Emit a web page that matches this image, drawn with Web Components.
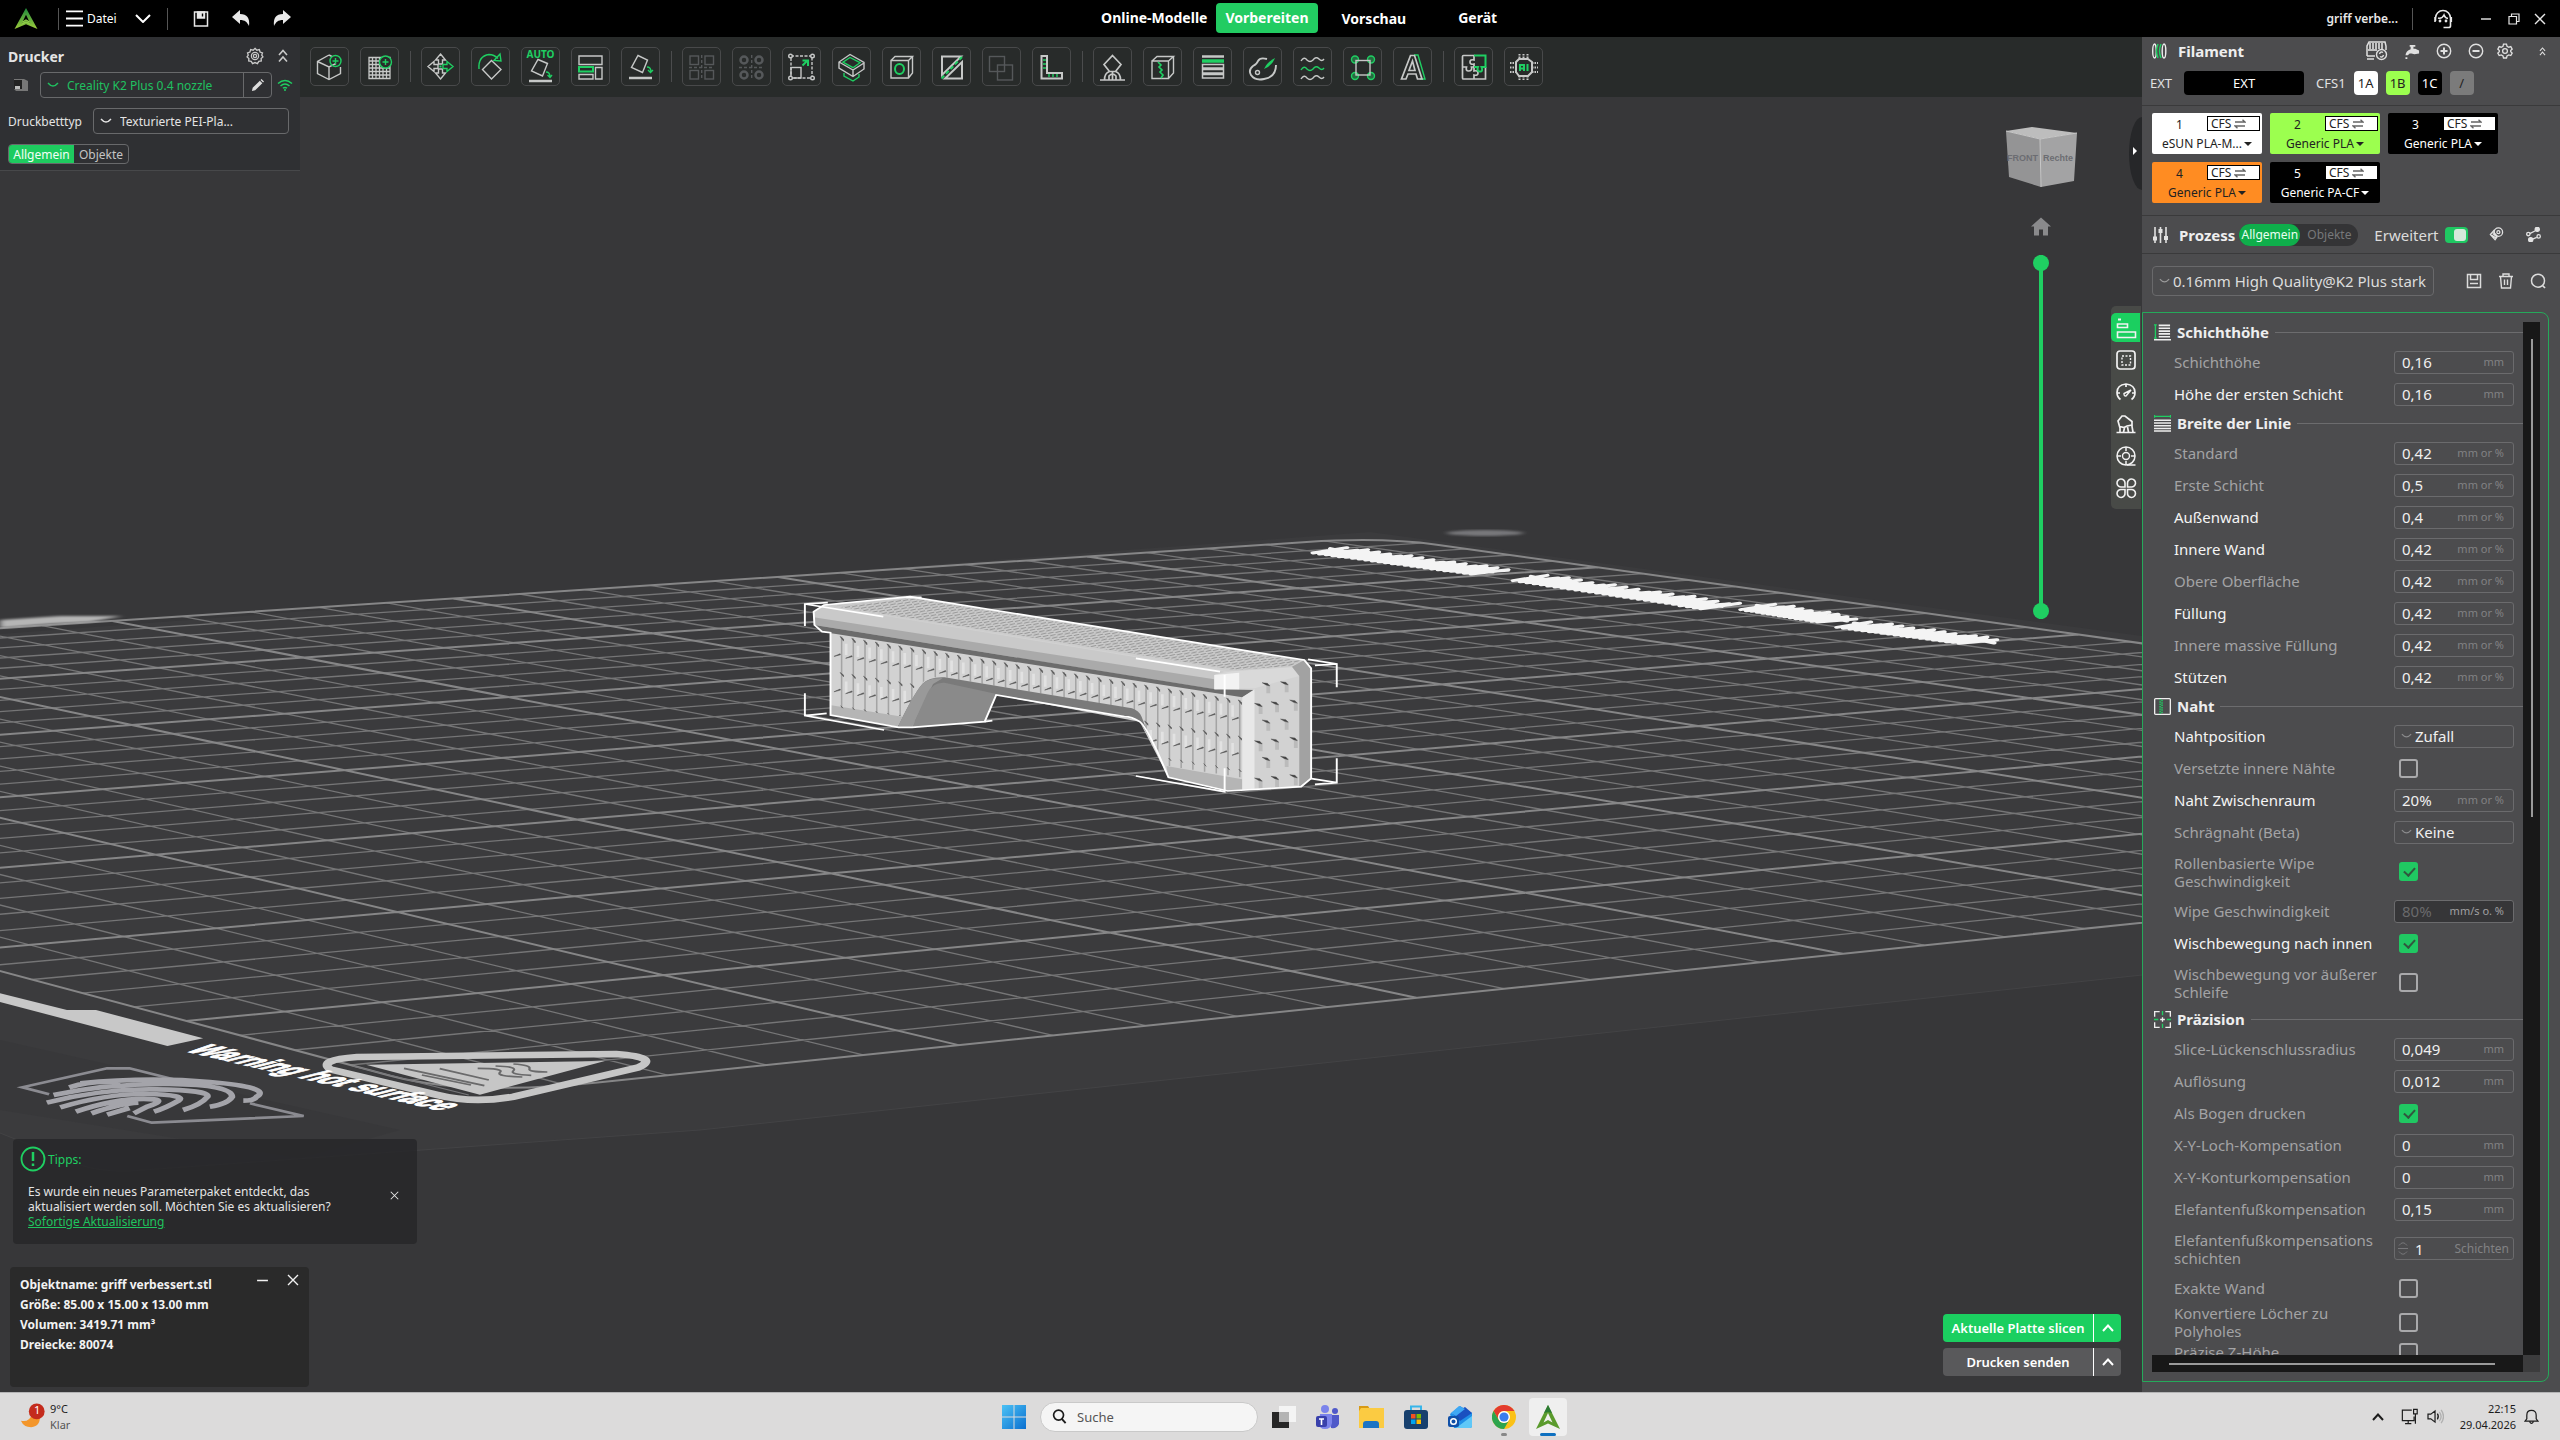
<!DOCTYPE html>
<html lang="de">
<head>
<meta charset="utf-8">
<title>griff verbessert</title>
<style>
html,body{margin:0;height:100%;background:#373739}
body{font-family:"Noto Sans","Liberation Sans",sans-serif;font-size:15px;color:#e6e6e6;overflow:hidden}
</style>
</head>
<body>
<slicer-app></slicer-app>
<script>
const RESET = `*{box-sizing:border-box}button,input,select{font:inherit;color:inherit;background:none;border:0;margin:0;padding:0;outline:0}button{display:flex;align-items:center;justify-content:center;cursor:pointer}svg{display:block}select{appearance:none}`;

function define(name, css, html, setup) {
  customElements.define(name, class extends HTMLElement {
    constructor() { super(); this.attachShadow({ mode: 'open' }); }
    connectedCallback() {
      const t = document.createElement('template');
      t.innerHTML = `<style>${RESET}${css}</style>` + (typeof html === 'function' ? html(this) : html);
      this.shadowRoot.replaceChildren(t.content.cloneNode(true));
      if (setup) setup(this.shadowRoot, this);
    }
  });
}

/* ---------- icons ---------- */
const G = '#1fcf62';
const sq = (x, y, w, h, c) => `<rect x="${x}" y="${y}" width="${w}" height="${h}"${c ? ` stroke="${c}"` : ''}/>`;
const ICONS = {
  logo: ['0 0 24 22', `<defs><linearGradient id="l" x1="0" x2="0" y1="0" y2="1"><stop offset="0" stop-color="#1f8a3c"/><stop offset="1" stop-color="#9ccb3b"/></linearGradient></defs><path d="M12 0 24 22 12 17 0 22Z M12 7 7.500 16.500 12 14.500 16.500 16.500Z" fill="url(#l)" fill-rule="evenodd" stroke="none"/><path d="M8 15 12 12.500 16 15M7.500 17 12 14.500 16.500 17" stroke="#8fd04a"/>`],
  menu: ['0 0 18 18', '<path d="M0 1.500h18M0 9h18M0 16.500h18" stroke-width="2"/>'],
  down: ['0 0 16 9', '<path d="m1 1 7 7 7-7" stroke-width="2"/>'],
  down2: ['0 0 12 6', '<path d="M1 1q5 6 10 0"/>'],
  up: ['0 0 12 8', '<path d="m1 7 5-5.500L11 7" stroke-width="2"/>'],
  save: ['0 0 16 16', '<path d="M1.500 1h13v14h-13z" stroke-width="1.500"/><path d="M4.500 1h7v6h-7z" fill="currentColor"/><path d="M9.500 2.500v3" stroke="#000"/>'],
  undo: ['0 0 18 17', '<path d="M8 0v4c7 0 10 4 9 12-2-4-4-6-9-6v4L0 7z" fill="currentColor" stroke="none"/>'],
  redo: ['0 0 18 17', '<path d="M10 0v4C3 4 0 8 1 16c2-4 4-6 9-6v4l8-7z" fill="currentColor" stroke="none"/>'],
  headset: ['0 0 20 20', '<path d="M2.500 12V9a7.500 7.500 0 0 1 15 0v8q0 1.500-2 1.500h-5M2 8v5M18.300 8v5M5 9q4 1 6-3 1 3 4 3.500" stroke-width="1.600"/><circle cx="7" cy="12" r=".7"/><circle cx="13" cy="12" r=".7"/>'],
  min: ['0 0 12 12', '<path d="M1 6h10"/>'],
  restore: ['0 0 12 12', '<path d="M1 3.500h7.500V11H1zM3.500 3.500V1H11v7.500H8.500" stroke-width="1.200"/>'],
  close: ['0 0 12 12', '<path d="m1 1 10 10M11 1 1 11" stroke-width="1.400"/>'],
  gear: ['0 0 20 20', '<path d="M10 1.500l2 2 2.800-.6.800 2.700 2.700 1L17.500 9l1.300 2-2 1.800.2 2.800-2.800.4-1.500 2.500-2.700-1.200-2.700 1.200L5.800 16 3 15.600l.2-2.800-2-1.800L2.500 9l-.8-2.400 2.700-1 .8-2.700L8 3.500z" stroke-width="1.500"/><circle cx="10" cy="10" r="4" stroke-width="1.400"/><circle cx="10" cy="10" r="1.800"/>'],
  gear2: ['0 0 16 16', '<path d="M6.500 1.200h3l.5 2 1.800 1 2-.6 1.400 2.500L13.700 7.500v1.200l1.500 1.400-1.400 2.500-2-.6-1.800 1-.5 2h-3l-.5-2-1.800-1-2 .6L.800 10.100l1.500-1.400V7.500L.800 6.100l1.400-2.500 2 .6 1.800-1z" stroke-width="1.300"/><circle cx="8" cy="8" r="2.400" stroke-width="1.300"/>'],
  dblup: ['0 0 10 14', '<path d="m1 6 4-4.500L9 6M1 12.500 5 8l4 4.500" stroke-width="1.600"/>'],
  printer: ['0 0 16 16', '<path d="M1 2h10l4 2v10H3L1 12z" fill="#777" stroke="none"/><path d="M1 3h8v9H1z" fill="#222" stroke="none"/><path d="M2 9h5v3H2z" fill="#bbb" stroke="none"/>'],
  pencil: ['0 0 14 14', '<path d="m1 13 .8-3.500L9.500 1.800l2.700 2.700-7.700 7.700zM10.300 1l1-.9L14 2.800l-1 1z" fill="#ddd" stroke="none"/>'],
  wifi: ['0 0 16 12', `<path d="M1 4.500q7-6 14 0M3.500 7q4.500-4 9 0M6 9.300q2-1.700 4 0" stroke="${G}" stroke-width="1.500"/><circle cx="8" cy="11" r="1" fill="${G}" stroke="none"/>`],
  /* toolbar */
  addcube: ['0 0 39 39', `<path d="M19 8 7.500 14.500v12L19 32.500l11.500-6V20M7.500 14.500 19 20l7-3.500M19 20v12.500M19 8l3 1.500"/><circle cx="25.500" cy="14" r="5.500" stroke="${G}"/><path d="M22.500 14h6M25.500 11v6" stroke="${G}"/>`],
  addplate: ['0 0 39 39', `<path d="M9 10.500h21v21H9zM9 14h21M9 17.500h21M9 21h21M9 24.500h21M9 28h21M12.500 10v21M16 10v21M19.500 10v21M23 10v21M26.500 10v21" stroke-width="1.300"/><circle cx="25.500" cy="15" r="6" fill="#282b2a" stroke="${G}"/><path d="M22.500 15h6M25.500 12v6" stroke="${G}"/>`],
  move: ['0 0 39 39', `<path d="M19.500 7l5 6h-3v4h-4v-4h-3zM19.500 32l5-6h-3v-4h-4v4h-3zM7 19.500l6-5v3h4v4h-4v3z"/><path d="M32 19.500l-6-5v3h-4v4h4v3z" stroke="${G}"/><path d="M18.500 19.500h2" stroke="${G}" stroke-width="2"/>`],
  rotate: ['0 0 39 39', `<path d="m20.500 13.500 9.500 9-9.500 9.500-9-9.500z"/><path d="M8 22Q7 9 18 7.500q5 0 9 4M29 7l1 7-7-.500z" stroke="${G}"/>`],
  auto: ['0 0 39 39', `<path d="m17 12.500 9.500 4-5 12.500-11-5z" /><path d="M8 34h23" stroke-width="2.500"/><path d="M25 25q4 0 4 5M26.500 28l2.500 2.500 2-2.500" stroke="${G}"/>`],
  arrange: ['0 0 39 39', `<path d="M8 9h23v8.500H8zM24.500 20.500H31V32h-6.500zM8 27.500h14V32H8z"/><path d="M8 20h14v4.500H8z" stroke="${G}" stroke-width="2"/>`],
  flatten: ['0 0 39 39', `<path d="m17 8.500 9.500 4.500-5 12.500-11-5z"/><path d="M8 31h23" stroke-width="2.500"/><path d="M26 20q4 0 4 5M27 23l2.500 2.500L32 23" stroke="${G}"/>`],
  split1: ['0 0 39 39', `${sq(8, 9, 8.500, 8.500)}${sq(23, 9, 8.500, 8.500)}${sq(8, 23.500, 8.500, 8.500)}${sq(23, 23.500, 8.500, 8.500)}<path d="M19.700 8v24M7 20.500h25" stroke-dasharray="3 2"/>`],
  split2: ['0 0 39 39', `<circle cx="12" cy="13" r="3.500" stroke-width="2.500"/><circle cx="27" cy="13" r="3.500" stroke-width="2.500"/><circle cx="12" cy="28" r="3.500" stroke-width="2.500"/><circle cx="27" cy="28" r="3.500" stroke-width="2.500"/><path d="M19.700 8v24M7 20.500h25" stroke-dasharray="3 2"/>`],
  scale: ['0 0 39 39', `<path d="M9 9h21v22H9z" stroke-dasharray="3 1.500"/>${sq(9, 20.500, 10, 10.500)}<g fill="#282b2a"><circle cx="8.500" cy="9" r="1.800"/><circle cx="30.500" cy="9" r="1.800"/><circle cx="8.500" cy="31" r="1.800"/><circle cx="30.500" cy="31" r="1.800"/></g><path d="m20.500 18.500 5-5M20.500 13.500h5.500V19" stroke="${G}" stroke-width="2"/>`],
  hollow: ['0 0 39 39', `<path d="M18 7.500 7 15v6l14 8.500 11-7.500v-6.500zM7 15l14 8 11-7M21 23v6.500"/><path d="m18 10.500-7 4.700 10 5.500 7-5z M12 26v3l9 5 6-4v-3" stroke="${G}"/>`],
  boolean: ['0 0 39 39', `<path d="M9 13.500h17.500V31H9zM9 13.500l4-4h17.500l-4 4M30.500 9.500V26l-4 5"/><ellipse cx="17.500" cy="22" rx="4.500" ry="5" stroke="${G}" stroke-width="2"/>`],
  cut: ['0 0 39 39', `<path d="M10 9.500h19L10 28zM30 15v16.500H13z" stroke-width="2"/><path d="M9.500 31.500 30 10" stroke="${G}" stroke-width="2" stroke-dasharray="4 2.500"/>`],
  merge: ['0 0 39 39', `${sq(7.500, 9.500, 15, 15)}${sq(15.500, 18, 15, 15)}`],
  measure: ['0 0 39 39', `<path d="M9.500 9h5.500v17h15v5.500H9.500z" stroke-width="2"/><path d="M11 13h3M11 17h3M11 21h3M17 30v-3M21 30v-3M25 30v-3" stroke="${G}"/>`],
  support: ['0 0 39 39', `<path d="m19.500 8.500 8.500 9-5.500 7h-6l-5.500-7zM7 33h25M11.500 33q0-7 5-8.500M27.500 33q0-7-5-8.500M16 33v-4q3.500-4 7 0v4M19.500 24.500V33" stroke-width="1.700"/>`],
  seam: ['0 0 39 39', `<path d="M9 14h16.500v17.500H9zM9 14l5-4.500h16.500l-5 4.500M30.500 9.500V26l-5 5.500"/><path d="M15 15l3 3-2 2 3 3-2 2 3 3-2 3" stroke="${G}" stroke-width="1.700"/>`],
  layers: ['0 0 39 39', `<path d="M9 9.500h22" stroke-width="2.500"/><path d="M9 14h22" stroke="${G}" stroke-width="3.500"/><path d="M9.500 17.500h21V21h-21zM9.500 22.500h21v3.500h-21zM9.500 27.500h21V31h-21z" stroke-width="1.500"/>`],
  paint: ['0 0 39 39', `<path d="M24 12q-7-2-9 2-1 3-5 5-5 4-2 9 4 6 13 4 12-2 12-14" stroke-width="1.900"/><circle cx="14.500" cy="25.500" r="2"/><path d="M32 11q-8 4-11 11 8-3 11-11z" fill="${G}" stroke="none"/>`],
  fuzzy: ['0 0 39 39', `<path d="M8 14q3-5 6-1 3 3 6 0 3-4 6-1 3 3 5 0M8 32q3-5 6-1 3 3 6 0 3-4 6-1 3 3 5 0"/><path d="M8 23q3-5 6-1 3 3 6 0 3-4 6-1 3 3 5 0" stroke="${G}"/>`],
  ears: ['0 0 39 39', `<g stroke="${G}" fill="${G}" fill-opacity=".4"><circle cx="12" cy="12.500" r="3.500"/><circle cx="28" cy="12.500" r="3.500"/><circle cx="12" cy="29" r="3.500"/><circle cx="28" cy="29" r="3.500"/></g>${sq(13, 13.500, 14, 14.500)}`],
  emboss: ['0 0 39 39', `<path d="M21 8h4l7 24h-5" stroke="${G}"/><path d="M17.500 8.500h4L29 32h-4.500L23 27h-8l-2 5H8.500zM19.500 14 16 23.500h6z" stroke-width="1.700"/>`],
  puzzle: ['0 0 39 39', `<path d="M20 8.500H9.500q-1 0-1 1V20h4q-1 4 2 4 4 0 3-4H20v-3q-4 1-4-2t4-2zM8.500 20v11q0 1 1 1H20v-4q4 1 4-2t-4-2v-4M20 32h11.500V20" stroke-width="1.700"/><path d="M20 8.500h11.500V20h-4q2 5-2 4.500-3-.500-1.500-4.500H20" stroke="${G}" stroke-width="2"/>`],
  ai: ['0 0 39 39', `<path d="M12 15l3-3h9l4 3v10l-4 4h-9l-3-4z" stroke-width="2"/><path d="M15.500 7v5M19.500 7v5M23.500 7v5M15.500 29v5M19.500 29v5M23.500 29v5" stroke-width="2" stroke-dasharray="1.500 1"/><path d="M6 16h6M6 20.500h6M6 25h6M28 16h6M28 20.500h6M28 25h6" stroke-width="2" stroke-dasharray="1.500 1"/><path d="M16 24v-6h4v6M16 21.500h4M23.500 17v7" stroke="${G}" stroke-width="2"/>`],
  /* viewport side */
  home: ['0 0 20 18', '<path d="M10 0 20 9h-3v9h-5v-6H8v6H3V9H0z" fill="#8a8a8c" stroke="none"/>'],
  q1: ['0 0 22 22', '<path d="M3 2.500h3" stroke-width="2"/><path d="M2.500 7h10v3.500h-10zM2.500 15h18v5.500h-18z" stroke-width="1.600" />'],
  q2: ['0 0 22 22', '<rect x="2" y="2" width="18" height="18" rx="3" stroke-width="1.700"/><path d="M7 7h8.500v9H7z" stroke-dasharray="2 1.500"/>'],
  q3: ['0 0 22 22', '<path d="M5.500 18.500Q2 16 2 11.500 2 4 11 3q9 1 9 8.500 0 4.500-3.500 7M11 3v3M2 12h3M17 12h3" stroke-width="1.700"/><path d="m11 15 5-6-7 3.500q0 3 2 2.500z"/>'],
  q4: ['0 0 22 22', '<path d="M1.500 19.500h19M5 19v-4l-2-7 4-5 3 0 7 5.500v5l1 5.500M5 13.500l4 1 3-1.500 5-1M8.500 19l1-4M13.500 19l-1-5" stroke-width="1.700"/>'],
  q5: ['0 0 22 22', '<circle cx="11" cy="11" r="9" stroke-width="1.500"/><circle cx="11" cy="11" r="3.500"/><path d="M11 2v4M11 16v4M2 11h4M16 11h4M12 20h8.500" stroke-width="1.500"/>'],
  q6: ['0 0 22 22', '<path d="M10 10H6.500A4 4 0 1 1 10 6zM12.500 10V6a4 4 0 1 1 3.500 4zM10 12.500H6.500A4 4 0 1 0 10 16zM12.500 12.500V16A4 4 0 1 0 16 12.500z" stroke-width="1.600"/>'],
  /* filament panel */
  spool: ['0 0 15 16', `<ellipse cx="2.500" cy="8" rx="1.800" ry="7"/><path d="M6 1q-3 7 0 14M9 1Q6 8 9 15" stroke="${G}"/><ellipse cx="12" cy="8" rx="1.800" ry="7"/>`],
  cfs: ['0 0 22 20', '<path d="M1 15V5l2-4h16l1 4v4M1 15h8M1 18h7" stroke-width="1.500"/><path d="M4 2v7M7 2v7M10 2v7M13 2v6M16 2v6M2 9h9" stroke-width="2" opacity=".8"/><circle cx="15.500" cy="13.500" r="5"/><path d="M13.500 13q1-3 3.500-1.500M17.500 14q-1 3-3.500 1.500"/>'],
  tap: ['0 0 16 16', '<path d="M5 1h6v2H9v2h2l4 2v3l-5 1-3-1H5l-2 2H.500Q1 7 6 5.500V3H5zM.500 14h2v2h-2z" fill="currentColor" stroke="none"/>'],
  plus: ['0 0 16 16', '<circle cx="8" cy="8" r="6.700"/><path d="M4.500 8h7M8 4.500v7" stroke-width="2"/>'],
  minus: ['0 0 16 16', '<circle cx="8" cy="8" r="6.700"/><path d="M4.500 8h7" stroke-width="2"/>'],
  swap: ['0 0 12 10', '<path d="M1 3h10L8.500.700M11 7H1l2.500 2.300" stroke="#666"/>'],
  sliders: ['0 0 16 18', '<path d="M2.500 1v16M8 1v16M13.500 1v16" stroke-width="1.600"/><path d="M2.500 10.500v4M8 3v4M13.500 10v4" stroke-width="4"/>'],
  rocket: ['0 0 16 16', '<circle cx="10" cy="5.500" r="4.500"/><circle cx="10" cy="5.500" r="1.600"/><path d="M6 3 1.500 8l5 5.500L9 10M3 9l5 3M4 7l4 3M5 5.500 9 10"/>'],
  nodes: ['0 0 16 16', '<circle cx="12" cy="2.500" r="2.200" fill="currentColor"/><circle cx="13.500" cy="10" r="1.800"/><circle cx="2.500" cy="7.500" r="1.800"/><circle cx="5" cy="13.500" r="2.200" fill="currentColor"/><path d="M10 4 4 7M11.500 11 7 13"/>'],
  savep: ['0 0 16 16', '<path d="M1.500 1.500h13v13h-13zM4.500 1.500h7v5h-7zM4 10.500h8" stroke-width="1.500"/>'],
  trash: ['0 0 16 16', '<path d="M1 3.500h14M5 3.500V1h6v2.500M2.500 3.500l1 11.500h9l1-11.500M6.500 6.500v5.500M9.500 6.500v5.500" stroke-width="1.400"/>'],
  search: ['0 0 16 16', '<circle cx="8" cy="7.700" r="6.500" stroke-width="1.500"/><path d="m12.500 12.500 2.500 2.500" stroke-width="1.700"/>'],
  h1: ['0 0 18 18', `<path d="M1.500 1v14M0 1h3M0 15h3" stroke="${G}"/><path d="M5 1.500h12M5 4.500h12M5 7.500h12M5 10.500h12M5 13.500h12M0 16.700h18" stroke-width="1.700"/>`],
  h2: ['0 0 18 18', `<path d="M0 1.500h18M.5 0v3M17.500 0v3" stroke="${G}"/><path d="M0 5.500h18M0 8.500h18M0 11.500h18M0 14.300h18M0 17h18" stroke-width="1.600"/>`],
  h3: ['0 0 18 18', `<rect x=".7" y=".7" width="16.600" height="16.600" rx="1"/><path d="M6.500 1v16M8.500 2v15" stroke="${G}" stroke-width="1.600" stroke-dasharray="1.500 1"/>`],
  h4: ['0 0 18 18', `<path d="M6 .7H.7V6M12 .7h5.300V6M6 17.300H.7V12M12 17.300h5.300V12"/><path d="M9 0v4.500M9 13.500V18M0 9h4.500M13.500 9H18" stroke="${G}"/><path d="M6.500 9h5M9 6.500v5"/>`],
  info: ['0 0 26 26', `<circle cx="13" cy="13" r="11.500" stroke="${G}" stroke-width="1.800"/><path d="M13 6v9M13 17.500V20" stroke="${G}" stroke-width="2.500"/>`],
  /* taskbar */
  moon: ['0 0 28 30', '<path d="M21 12q2 13-9 14-8 0-11-7 9 2 12-7z" fill="#f3962b" stroke="none"/><circle cx="18" cy="9" r="8.500" fill="#c42b1c" stroke="none"/>'],
  win: ['0 0 24 24', '<defs><linearGradient id="w" x1="0" y1="0" x2="1" y2="1"><stop offset="0" stop-color="#4cc2f5"/><stop offset="1" stop-color="#0a6fd0"/></linearGradient></defs><path d="M0 0h11.500v11.500H0zM12.500 0H24v11.500H12.500zM0 12.500h11.500V24H0zM12.500 12.500H24V24H12.500z" fill="url(#w)" stroke="none"/>'],
  mag: ['0 0 16 16', '<circle cx="7" cy="6.500" r="5.300" stroke-width="1.800"/><path d="m10.500 10.500 4 4.500" stroke-width="2"/>'],
  task: ['0 0 24 24', '<path d="M7 1h17v16H7z" fill="#f4f4f4" stroke="none"/><path d="M0 7h17v16H0z" fill="#262626" stroke="none"/><path d="M7 7h10v10H7z" fill="#b4b4b4" stroke="none"/>'],
  teams: ['0 0 24 24', '<g stroke="none"><circle cx="9" cy="4" r="4" fill="#7b83eb"/><circle cx="19" cy="6" r="3" fill="#5059c9"/><path d="M13 10h10v9q-2 5-8 4z" fill="#5059c9"/><path d="M4 9h12v9q-1 6-7 6t-6-6z" fill="#7b83eb"/><rect y="11" width="11" height="11" rx="2" fill="#3940ab"/></g><path d="M3 14h5M5.500 14v6" stroke="#fff" stroke-width="1.600"/>'],
  files: ['0 0 26 24', '<path d="M0 1h9l2 3h13v4H0z" fill="#d89a16" stroke="none"/><path d="M2 3h23v20H0V6z" fill="#fbcb42" stroke="none"/><path d="M4 23v-4q0-3 3-3h10q3 0 3 3v4z" fill="#1c74c4" stroke="none"/>'],
  store: ['0 0 24 24', '<path d="M7 6V1.500h10V6" stroke="#37b5ea" stroke-width="2"/><rect y="5" width="24" height="19" rx="3" fill="#17406e" stroke="none"/><g stroke="none"><path d="M7 9h4.500v4.500H7z" fill="#f25022"/><path d="M12.500 9H17v4.500h-4.500z" fill="#7fba00"/><path d="M7 14.500h4.500V19H7z" fill="#00a4ef"/><path d="M12.500 14.500H17V19h-4.500z" fill="#ffb900"/></g>'],
  outlook: ['0 0 24 24', '<g stroke="none"><path d="M2 9 12 1l12 7v13q0 2-2 2H6z" fill="#1f8fe8"/><path d="M5 9 17 2l7 6-12 8z" fill="#1a50c0"/><path d="M3 8 11 1l6 3-9 7z" fill="#3fa8f4"/><path d="M8 23 24 11v10q0 2-2 2z" fill="#5fc8f8"/><rect y="11" width="11" height="11" rx="2" fill="#1050a8"/></g><circle cx="5.500" cy="16.500" r="2.800" stroke="#fff" stroke-width="1.500"/>'],
  chrome: ['0 0 24 24', '<g stroke="none"><circle cx="12" cy="12" r="12" fill="#fbc116"/><path d="M1.600 6A12 12 0 0 1 22.400 6H12a6 6 0 0 0-5.200 9z" fill="#e33b2e"/><path d="M1.600 6A12 12 0 0 0 12 24l5.200-9a6 6 0 0 1-10.400 0z" fill="#2da44e"/><circle cx="12" cy="12" r="6" fill="#fff"/><circle cx="12" cy="12" r="4.600" fill="#3b7ded"/></g>'],
  creality: ['0 0 24 24', '<path d="M12 0 24 24 12 18.500 0 24Z M12 8 7.500 17.500 12 15 16.500 17.500Z" fill="#5a9a2c" fill-rule="evenodd" stroke="none"/><path d="M12 0 8 8l4-1 4 1z" fill="#2b7a34" stroke="none"/>'],
  net: ['0 0 20 18', '<path d="M12 2H1.500v11.500h13V9M8 13.500V17M4.500 17h7M14 1h4v5h-4zM16 6v11" stroke-width="1.300"/>'],
  vol: ['0 0 18 16', '<path d="M1 5.500h3L8.500 2v12L4 10.500H1zM11 5q2 3 0 6" stroke-width="1.300"/><path d="M13 3q4 5 0 10M15 1q5 7 0 14" stroke="#b0b0b0"/>'],
  bell: ['0 0 16 16', '<path d="M1 12.500h14L13 10V6Q13 1 8 1T3 6v4zM6 13q2 3.500 4 0" stroke-width="1.300"/>'],
};
define('ui-icon', `:host{display:inline-block;flex:none;line-height:0}`, el => {
  const [vb, body] = ICONS[el.getAttribute('name')];
  const w = el.getAttribute('w'), h = el.getAttribute('h') || w;
  return `<svg width="${w}" height="${h}" viewBox="${vb}" fill="none" stroke="currentColor" stroke-width="1.400" aria-hidden="true">${body}</svg>`;
});

/* ---------- title bar ---------- */
define('title-bar', `
:host{display:flex;height:37px;background:#000;color:#e8e8e8;align-items:center}
.left{width:42.660%;display:flex;align-items:center;padding-left:14px}
.sep{width:1px;height:22px;background:#555}
.file{font-size:12px;gap:4px;color:#fff;margin-left:7px}
.file ui-icon:last-child{margin-left:14px}
.left .sep:first-of-type{margin-left:20px}
nav{display:flex;align-items:center;font-size:14px;font-weight:700;color:#fff}
nav button{height:30px;padding:0 9px;border-radius:4px;margin-bottom:2px;white-space:nowrap}
nav .on{background:#22cc62;min-width:100px}
.right{margin-left:auto;display:flex;align-items:center;padding-right:8px;font-size:12px;font-weight:600}
.right button{width:28px;height:30px}
`, `
<div class="left"><ui-icon name="logo" w="24" h="21"></ui-icon><i class="sep"></i>
<button class="file"><ui-icon name="menu" w="17" h="17"></ui-icon><span>Datei</span><ui-icon name="down" w="16" h="9"></ui-icon></button>
<i class="sep" style="margin:0 25px 0 16px"></i>
<button aria-label="Speichern"><ui-icon name="save" w="16"></ui-icon></button>
<button aria-label="Rückgängig" style="margin:0 23px"><ui-icon name="undo" w="18" h="17"></ui-icon></button>
<button aria-label="Wiederholen"><ui-icon name="redo" w="18" h="17"></ui-icon></button></div>
<nav><button>Online-Modelle</button><button class="on">Vorbereiten</button><button style="margin:0 34px 0 15px">Vorschau</button><button>Gerät</button></nav>
<div class="right"><span>griff verbe...</span><i class="sep" style="margin:0 16px 0 14px"></i>
<button aria-label="Support" style="margin-right:15px"><ui-icon name="headset" w="20"></ui-icon></button>
<button aria-label="Minimieren"><ui-icon name="min" w="12"></ui-icon></button><button aria-label="Wiederherstellen"><ui-icon name="restore" w="12"></ui-icon></button><button aria-label="Schließen" style="width:24px"><ui-icon name="close" w="12"></ui-icon></button></div>`);

/* ---------- printer panel ---------- */
define('printer-panel', `
:host{display:flex;flex-direction:column;width:300px;height:134px;background:#2f3033;border-bottom:1px solid #47484a;padding:9px 7px 0 8px;font-size:12px;color:#e4e4e4;flex:none}
header{display:flex;align-items:center;height:20px;font-size:14px;font-weight:700;padding-right:5px}
header button{color:#c9c9c9}
.g{margin-left:auto;margin-right:14px}
.row{display:flex;align-items:center;height:26px}
.box{display:flex;align-items:center;border:1px solid #68696b;border-radius:4px;height:26px;position:relative}
.box select{flex:1;height:100%;padding-left:26px;width:100%}
.box>ui-icon{position:absolute;left:6px;pointer-events:none}
.edit{width:28px;height:100%;border-left:1px solid #68696b}
.seg{display:flex;height:20px;width:121px;border:1px solid #68696b;border-radius:4px;overflow:hidden;margin-top:10px;color:#c4c4c4}
.seg button{flex:1}.seg .on{background:#1ecb5f;color:#f2fff6;flex:none;width:65px}
`, `
<header><span>Drucker</span><button class="g" aria-label="Einstellungen"><ui-icon name="gear" w="18"></ui-icon></button><button aria-label="Einklappen"><ui-icon name="dblup" w="10" h="14"></ui-icon></button></header>
<div class="row" style="margin:6px 0 10px;gap:5px"><ui-icon name="printer" w="16" style="margin:0 6px 0 5px"></ui-icon>
<div class="box" style="flex:1;color:#20c060"><ui-icon name="down2" w="12" h="6"></ui-icon><select aria-label="Drucker"><option>Creality K2 Plus 0.4 nozzle</option></select><button class="edit" aria-label="Bearbeiten"><ui-icon name="pencil" w="13"></ui-icon></button></div><ui-icon name="wifi" w="16" h="12"></ui-icon></div>
<div class="row"><label for="bed" style="width:85px">Druckbetttyp</label><div class="box" style="width:196px"><ui-icon name="down2" w="12" h="6"></ui-icon><select id="bed"><option>Texturierte PEI-Pla...</option></select></div></div>
<div class="seg"><button class="on">Allgemein</button><button>Objekte</button></div>`);

/* ---------- toolbar ---------- */
const TOOLS = ['addcube', 'addplate', '|', 'move', 'rotate', 'auto', 'arrange', 'flatten', '|', '-split1', '-split2', 'scale', 'hollow', 'boolean', 'cut', '-merge', 'measure', '|', 'support', 'seam', 'layers', 'paint', 'fuzzy', 'ears', 'emboss', '|', 'puzzle', 'ai'];
define('tool-bar', `
:host{display:flex;flex:1;height:60px;background:#282b2a;padding:10px 10px 0;gap:11px;color:#c6c8c7}
button{width:39px;height:39px;border:1px solid #48494a;border-radius:5px;position:relative}
button ui-icon{margin:-1px}
.off{color:#55585a}
i{width:1px;height:31px;background:#4b4c4d;margin:4px -1px 0 0}
b{position:absolute;top:-1px;left:0;right:0;text-align:center;font-size:10px;line-height:14px;color:${G};font-weight:700}
`, TOOLS.map(t => t === '|' ? '<i></i>' : `<button aria-label="${t.replace('-', '')}"${t[0] === '-' ? ' class="off"' : ''}>${t === 'auto' ? '<b>AUTO</b>' : ''}<ui-icon name="${t.replace('-', '')}" w="39"></ui-icon></button>`).join(''));

/* ---------- 3D scene ---------- */
function bedPoint(u, v) {
  const g = 0.2681, h = 0.3863, w = 1 + g * u + h * v;
  return [(466 + 3706 * u - 1885.6 * v) / w, (1096 - 76.4 * u - 131.1 * v) / w];
}
const pt = (u, v) => bedPoint(u, v).map(n => n.toFixed(1)).join(' ');
function bedGrid() {
  let thin = '', bold = '';
  for (let i = 1; i < 35; i++) {
    const s = `M${pt(i / 35, 0)}L${pt(i / 35, 1)}M${pt(0, i / 35)}L${pt(1, i / 35)}`;
    if (i % 5) thin += s; else bold += s;
  }
  const r = 1.3 / 35, q = 1 - r;
  const edge = `M${pt(r, 0)}L${pt(q, 0)}Q${pt(1, 0)} ${pt(1, r)}L${pt(1, q)}Q${pt(1, 1)} ${pt(q, 1)}L${pt(r, 1)}Q${pt(0, 1)} ${pt(0, q)}L${pt(0, r)}Q${pt(0, 0)} ${pt(r, 0)}Z`;
  return `<clipPath id="bed"><path d="${edge}"/></clipPath><g fill="none" clip-path="url(#bed)"><path d="${thin}" stroke="#757576" stroke-width="1.300"/><path d="${bold}" stroke="#868687" stroke-width="2"/></g><path d="${edge}" fill="none" stroke="#868687" stroke-width="2"/>`;
}
function plateLettering() {
  let s = '';
  const runs = [[60, 152, 430, 218], [425, 235, 850, 322], [840, 322, 1060, 362], [1015, 375, 1320, 425]];
  for (const [x0, y0, x1, y1] of runs) {
    const n = Math.round((x1 - x0) / 15);
    for (let i = 0; i < n; i++) {
      const t = i / n, x = x0 + (x1 - x0 - 70) * t, y = y0 + (y1 - y0) * t;
      s += `M${x.toFixed(0)} ${(y + 7).toFixed(0)}l${62 + (i * 7) % 18} ${-16 + (i * 5) % 9}`;
      if (i % 3 === 1) s += `M${(x + 20).toFixed(0)} ${(y - 9).toFixed(0)}l44 15`;
    }
  }
  return s;
}
function knurl() {
  let lines = '', ticks = '', light = '';
  for (let i = 0; i < 35; i++) {
    const x = 161 + i * 30.6, y = 224 + (x - 132) * 0.183;
    lines += `M${x} ${y}V${y + 232}`;
    light += `M${x + 12} ${y + 22}v34M${x + 12} ${y + 135}v34`;
    ticks += `M${x - 4} ${y}l9 8v6zM${x - 20} ${y + 60}l16 -8 1 3zM${x - 4} ${y + 108}l9 8v5zM${x - 20} ${y + 166}l16 -8 1 3zM${x - 2} ${y + 208}l6 8z`;
  }
  return `<g clip-path="url(#wall)"><path d="${lines}" stroke="#a4a4a4" stroke-width="4"/><path d="${light}" stroke="#e2e2e2" stroke-width="7"/><path d="${ticks}" fill="#555" stroke="#555" stroke-width="1.500"/></g>`;
}
function topKnurl() {
  let s = '';
  for (let j = 0; j < 12; j++) for (let i = 0; i < 44; i++) {
    const x = 150 + i * 24 + j * 19, y = 146 + i * 4.6 - j * 2.6;
    s += `M${x} ${y}l14 -4`;
  }
  let d = '';
  for (let j = 0; j < 12; j++) { const x = 130 + j * 19, y = 138 - j * 2.5; d += `M${x} ${y}L${x + 1080} ${y + 203}`; }
  return `<g clip-path="url(#top)"><path d="${d}" stroke="#bdbdbd" stroke-width="2"/><path d="${s}" stroke="#8e8e8e" stroke-width="2.200"/></g>`;
}
function sideKnurl() {
  let s = '', l = '';
  for (let r = 0; r < 3; r++) {
    for (const [x, y] of [[1260, 368], [1308, 365], [1240, 430], [1283, 425], [1332, 420]]) {
      const Y = y + r * 112;
      s += `M${x} ${Y}l14 2 6 8-10-3z`; l += `M${x + 16} ${Y + 6}v26`;
    }
  }
  return `<path d="${l}" stroke="#bbb" stroke-width="10"/><path d="${s}" fill="#444" stroke="#444"/>`;
}
define('scene-view', `:host{display:block;min-width:0;min-height:0;overflow:hidden;background:#373739}svg{width:100%;height:100%}text{font-family:"Liberation Sans",sans-serif}`,
`<svg viewBox="0 37 2142 1355" preserveAspectRatio="xMidYMid slice">
<path d="M0 634 1370 532 2142 636V975L700 1130 130 1171Q100 1172 80 1165L0 1133Z" fill="#3b3b3d"/>
<path d="M0 1040 400 1130 300 1158 0 1110Z" fill="#343436" opacity=".4"/>
<path d="M0 1133 80 1165Q100 1172 130 1171L700 1130 2142 975" fill="none" stroke="#434345"/>
${bedGrid()}
<defs><filter id="soft"><feGaussianBlur stdDeviation="3 1"/></filter></defs>
<ellipse cx="1485" cy="533" rx="38" ry="3" fill="#77777a" filter="url(#soft)"/>
<path d="M0 620 60 616 122 616 90 622 50 624 0 628Z" fill="#b5b5b5" filter="url(#soft)"/>
<g transform="translate(1280 500) scale(.54847 .33333)" fill="none" stroke="#f4f4f4" stroke-width="9" stroke-linecap="round"><path d="${plateLettering()}"/></g>
<g transform="translate(0 980) scale(.44643 .33333)">
 <path d="M0 40 150 90H215L455 175 375 198 0 66Z" fill="#c8c8c8"/>
 <path d="M800 231 1380 222Q1480 232 1430 262L1150 350Q1060 372 980 345L740 268Q710 240 800 231Z" fill="none" stroke="#c6c6c6" stroke-width="20"/>
 <path d="M820 254 1355 243 1075 344Z" fill="#c6c6c6"/>
 <path d="M905 265l180 52M945 285l110 30M985 266l110 34M1070 265q60 0 50 12t50 14M1110 258q50 2 40 14t40 14M1150 252q40 4 36 14t40 10" stroke="#6a6a6b" stroke-width="5" fill="none"/><path d="M790 258 1050 345" stroke="#77777a" stroke-width="3"/>
 <g fill="none" stroke="#8b8b91" stroke-width="8"><path d="M110 343 50 322 240 265H290L395 300M285 408 340 428 680 408 560 370"/></g>
 <g fill="none" stroke="#a4a4aa" stroke-width="14"><path d="M155 322Q210 300 270 308M180 310Q330 290 470 306T575 350Q570 362 545 362M120 345Q240 310 380 312T520 350Q510 372 470 380M105 368Q230 325 350 328T465 350Q450 375 410 390M135 382Q240 340 330 342 420 345 400 362 370 385 345 395M170 395Q270 350 345 358 370 362 330 380L300 400M205 400Q270 370 310 368M240 404 290 384"/></g>
</g>
<text transform="matrix(1.330 .31 -2 .5 184 1051)" font-size="20" font-weight="700" fill="#fff" stroke="#fff" stroke-width="1">Warning hot surface</text>
<g transform="translate(780 560) scale(.38265 .33333)">
 <clipPath id="wall"><path d="M134 222 1208 412V655L1015 620 940 485 920 447 430 352H395L375 365 330 470 134 440Z"/></clipPath>
 <clipPath id="top"><path d="M135 137 340 114 1362 302 1335 318 1190 330Z"/></clipPath>
 <path d="M88 155 115 135 340 110 1370 300 1388 325V655L1362 680 1170 693 1015 652 940 485 565 405 535 485 345 502 132 465V218L110 215 90 195Z" fill="#d2d2d2"/>
 <path d="M134 436 320 470 308 500 132 465ZM1010 618 1208 658V690L1170 692 1015 652Z" fill="#b5b5b5"/>
 ${knurl()}
 <path d="M115 137 340 112 1368 300 1338 322 1180 335Z" fill="#cdcdcd"/>${topKnurl()}
 <path d="M88 155 118 138 1160 335 1135 345V372L88 178Z" fill="#c9c9c9"/>
 <path d="M88 172 1135 358V388L90 195Z" fill="#aaa"/>
 <path d="M90 195 1138 388 1240 390 1208 412 134 220 108 214Z" fill="#6c6c6c"/>
 <path d="M308 500Q350 400 372 372 390 350 430 352L920 445Q938 452 945 470L965 530 940 485 925 477 565 405Z" fill="#7a7a7a"/>
 <path d="M308 500Q350 400 372 372 390 352 425 355L400 372 345 502Z" fill="#999"/>
 <path d="M345 502 385 400Q398 366 430 368L566 402 535 485Z" fill="#8a8a8a"/>
 <path d="M1135 345 1180 334 1338 322 1357 348 1240 385 1135 388Z" fill="#d9d9d9"/><path d="M1135 345 1200 338V388H1135Z" fill="#f2f2f2"/>
 <path d="M1208 412 1240 388V686L1208 689Z" fill="#e8e8e8"/>
 <path d="M1338 320 1370 300 1388 325V655L1357 680V348Z" fill="#a2a2a2"/>
 ${sideKnurl()}
 <g fill="none" stroke="#fff" stroke-width="5"><path d="M88 155 115 135 340 110 1370 300 1388 325V655L1362 680 1170 693 1015 652Q960 500 940 485T900 470L565 405 535 485 345 502H310L132 465V218L110 215 90 195Z"/>
 <path d="M65 198V132L125 128M65 132 270 170M330 112 370 112M930 295 1150 335M1162 345V410M1380 298 1455 312V382M1455 312 1398 316M65 400V467L272 510M65 467 122 460M535 485 555 482M930 648 1162 695V625M1455 595V668L1398 673M1455 668 1385 655"/></g>
</g>
</svg>`);

define('layer-slider', `
:host{display:block;position:relative;width:16px}
input{appearance:none;writing-mode:vertical-lr;direction:rtl;width:16px;height:100%;display:block}
input::-webkit-slider-runnable-track{width:4px;height:100%;background:${G};margin:0 auto}
input::-webkit-slider-thumb{appearance:none;width:16px;height:16px;border-radius:50%;background:${G};margin-left:-6px}
:host::after{content:"";position:absolute;bottom:0;left:0;width:16px;height:16px;border-radius:50%;background:${G}}
`, `<input type="range" value="100" aria-label="Schichten">`);

define('view-cube', `:host{display:flex;flex-direction:column;align-items:center;gap:28px}svg{width:74px;height:64px}text{font:700 9px "Liberation Sans",sans-serif;fill:#6c6d72}`,
`<svg viewBox="0 0 74 64"><path d="M2 6 28 2 73 8 36 14Z" fill="#bdbdbd"/><path d="M2 6 36 14 37 62 5 52Z" fill="#949495"/><path d="M36 14 73 8 70 56 37 62Z" fill="#a3a3a4"/><path d="M2 6 36 14 73 8M36 14 37 62" stroke="#c8c8c8" fill="none"/><text x="3" y="36">FRONT</text><text x="39" y="36">Rechte</text></svg><ui-icon name="home" w="20" h="19"></ui-icon>`);

define('category-tabs', `
:host{display:flex;flex-direction:column;width:30px;background:#484a47;padding:7px 1px 7px 0;border-radius:5px 0 0 5px;color:#f2f2f2;gap:3px}
button{height:29px}.on{background:#1bcf60;border-radius:5px 0 0 5px}
`, [1, 2, 3, 4, 5, 6].map(i => `<button aria-label="Kategorie ${i}"${i === 1 ? ' class="on"' : ''}><ui-icon name="q${i}" w="22"></ui-icon></button>`).join(''));

define('tip-box', `
:host{display:flex;width:404px;height:105px;background:rgba(39,39,41,.85);border-radius:4px;padding:7px 18px 0 7px;font-size:12px;line-height:15px;color:#e4e4e4;justify-content:space-between}
.t{display:flex;align-items:center;gap:2px;color:${G};margin-bottom:12px}
p{margin:0 0 0 8px}a{color:#1fc45e;text-decoration:underline}
`, `<div><div class="t"><ui-icon name="info" w="26"></ui-icon><span>Tipps:</span></div><p>Es wurde ein neues Parameterpaket entdeckt, das<br>aktualisiert werden soll. Möchten Sie es aktualisieren?<br><a href="#update">Sofortige Aktualisierung</a></p></div><button aria-label="Schließen"><ui-icon name="close" w="9"></ui-icon></button>`);

define('object-info', `
:host{display:flex;justify-content:space-between;width:299px;height:120px;background:#2a2a2a;border-radius:4px;padding:8px 10px;font-size:12px;line-height:20px;font-weight:700;color:#f2f2f2}
.b{display:flex;gap:18px;height:12px;margin-top:-1px}
`, `<div>Objektname: griff verbessert.stl<br>Größe: 85.00 x 15.00 x 13.00 mm<br>Volumen: 3419.71 mm³<br>Dreiecke: 80074</div><div class="b"><button aria-label="Minimieren"><ui-icon name="min" w="13"></ui-icon></button><button aria-label="Schließen"><ui-icon name="close" w="12"></ui-icon></button></div>`);

define('slice-actions', `
:host{display:flex;flex-direction:column;gap:6px;width:178px;font-size:13px;font-weight:600;color:#fff}
div{display:flex;height:28px;background:#59595b;border-radius:4px;overflow:hidden}
.go{background:#1bcf60}
button:first-child{flex:1}button:last-child{width:28px;border-left:1px solid #fff}
`, `<div class="go"><button>Aktuelle Platte slicen</button><button aria-label="Optionen"><ui-icon name="up" w="12" h="8"></ui-icon></button></div><div><button>Drucken senden</button><button aria-label="Optionen"><ui-icon name="up" w="12" h="8"></ui-icon></button></div>`);

define('view-port', `
:host{display:grid;min-width:0;min-height:0;position:relative;overflow:hidden}
scene-view{grid-area:1/1}
.bars{grid-area:1/1;display:flex;align-items:flex-start;z-index:1}
view-cube{position:absolute;top:88px;right:64px}
layer-slider{position:absolute;top:218px;right:93px;height:364px}
category-tabs{position:absolute;top:269px;right:1px}
.fold{position:absolute;top:80px;right:0;width:13px;height:73px;background:#262729;clip-path:ellipse(13px 50% at 100% 50%)}
.fold::after{content:"";position:absolute;left:4px;top:30px;border:4px solid transparent;border-left-color:#fff;border-right:0}
tip-box{position:absolute;left:13px;bottom:148px}
object-info{position:absolute;left:10px;bottom:5px}
slice-actions{position:absolute;right:21px;bottom:16px}
`, `<scene-view></scene-view><div class="bars"><printer-panel></printer-panel><tool-bar></tool-bar></div><view-cube></view-cube><layer-slider></layer-slider><button class="fold" aria-label="Seitenleiste"></button><category-tabs></category-tabs><tip-box></tip-box><object-info></object-info><slice-actions></slice-actions>`);

/* ---------- side panel ---------- */
define('filament-card', `
:host{display:grid;grid-template-columns:1fr 53px;width:110px;height:41px;border-radius:2px;padding:3px 2px 0 0;font-size:12px;background:var(--bg);color:var(--fg);white-space:nowrap}
.n{text-align:center;line-height:17px}
.c{display:flex;align-items:center;gap:3px;height:15px;background:#fff;border:1px solid #000;color:#222;padding-left:3px;justify-content:flex-start}
.m{grid-column:1/3;line-height:20px;gap:2px;padding:0 2px 0 4px;height:20px}
.m::after{content:"";border:4px solid transparent;border-top-color:currentColor;border-bottom:0}
`, el => `<span class="n">${el.getAttribute('no')}</span><button class="c">CFS<ui-icon name="swap" w="12" h="10"></ui-icon></button><button class="m"><slot></slot></button>`);

define('filament-panel', `
:host{display:block;font-size:13px}
header{display:flex;align-items:center;height:28px;padding:0 11px 0 10px;font-size:15px;font-weight:700;color:#eee}
header span{margin:0 auto 0 11px}
header button{color:#e0e0e0;width:16px;margin-left:16px}
.slots{display:flex;align-items:center;height:40px;padding:0 8px 4px;gap:8px}
.slots button{width:24px;height:24px;border-radius:4px}
.slots .ext{width:120px;background:#000;color:#fff;margin:0 4px}
.cards{display:grid;grid-template-columns:repeat(3,110px);gap:8px;padding:7px 10px 12px;border-top:1px solid #3a3a3b;border-bottom:1px solid #3a3a3b}
`, `<header><ui-icon name="spool" w="15" h="16"></ui-icon><span>Filament</span><button aria-label="CFS" style="width:22px"><ui-icon name="cfs" w="22" h="20"></ui-icon></button><button aria-label="Spülen"><ui-icon name="tap" w="15"></ui-icon></button><button aria-label="Hinzufügen"><ui-icon name="plus" w="16"></ui-icon></button><button aria-label="Entfernen"><ui-icon name="minus" w="16"></ui-icon></button><button aria-label="Einstellungen" style="margin:0 22px 0 13px"><ui-icon name="gear2" w="16"></ui-icon></button><button aria-label="Einklappen" style="margin:0;width:14px"><ui-icon name="dblup" w="7" h="9"></ui-icon></button></header>
<div class="slots"><span>EXT</span><button class="ext">EXT</button><span>CFS1</span><button style="background:#fff;color:#222">1A</button><button style="background:#9cff4f;color:#222">1B</button><button style="background:#000;color:#fff">1C</button><button style="background:#7b7b7b;color:#222">/</button></div>
<div class="cards"><filament-card no="1" style="--bg:#fff;--fg:#222">eSUN PLA-M...</filament-card><filament-card no="2" style="--bg:#9cff4f;--fg:#222">Generic PLA</filament-card><filament-card no="3" style="--bg:#000;--fg:#fff">Generic PLA</filament-card><filament-card no="4" style="--bg:#ff8c22;--fg:#222">Generic PLA</filament-card><filament-card no="5" style="--bg:#000;--fg:#fff">Generic PA-CF</filament-card></div>`);

define('process-header', `
:host{display:block}
.a{display:flex;align-items:center;height:38px;padding:0 19px 0 10px;border-bottom:1px solid #3a3a3b}
h2{font-size:15px;font-weight:700;margin:0 4px 0 10px;color:#eee}
.pill{display:flex;width:119px;height:22px;background:#343436;border-radius:11px;font-size:12px;color:#77787a}
.pill button{flex:1}.pill .on{background:#0fae4b;color:#e9fff1;border-radius:11px;flex:none;width:61px}
label{margin:0 6px 0 16px;font-size:15px;color:#dcdcdc}
input{appearance:none;width:23px;height:16px;border-radius:4px;background:#1fc862;position:relative;margin-right:21px}
input::after{content:"";position:absolute;right:2px;top:2px;width:12px;height:12px;border-radius:3px;background:#d5e8da}
.b{display:flex;align-items:center;height:58px;padding:0 14px 4px 10px;color:#dcdcdc}
.box{width:282px;height:30px;border:1px solid #69696b;border-radius:4px;position:relative;display:flex;align-items:center;margin-right:auto}
.box ui-icon{position:absolute;left:6px;color:#999;pointer-events:none}
select{width:100%;height:100%;padding-left:20px;font-size:15px}
.b button{margin-left:16px}
`, `<div class="a"><ui-icon name="sliders" w="17" h="18"></ui-icon><h2>Prozess</h2><div class="pill"><button class="on">Allgemein</button><button>Objekte</button></div><label for="adv">Erweitert</label><input type="checkbox" id="adv" checked><button aria-label="Kalibrieren" style="margin-right:auto"><ui-icon name="rocket" w="15"></ui-icon></button><button aria-label="Vergleichen"><ui-icon name="nodes" w="15"></ui-icon></button></div>
<div class="b"><div class="box"><ui-icon name="down2" w="11" h="6"></ui-icon><select aria-label="Profil"><option>0.16mm High Quality@K2 Plus stark</option></select></div><button aria-label="Speichern"><ui-icon name="savep" w="16"></ui-icon></button><button aria-label="Löschen"><ui-icon name="trash" w="16"></ui-icon></button><button aria-label="Suchen"><ui-icon name="search" w="16"></ui-icon></button></div>`);

define('setting-group', `
:host{display:block}
h3{display:flex;align-items:center;gap:6px;height:27px;margin:0;padding-left:2px;font-size:15px;line-height:20px;font-weight:700;color:#eee}
h3 span{padding-bottom:2px}
h3::after{content:"";flex:1;height:1px;background:#6c6c6e}
`, el => `<h3><ui-icon name="${el.getAttribute('icon')}" w="17"></ui-icon><span>${el.getAttribute('title-text')}</span></h3><slot></slot>`);

define('setting-row', `
:host{display:grid;grid-template-columns:220px 120px;align-items:center;height:32px;padding-left:22px;font-size:15px;line-height:18px;color:#a3a3a5}
:host([two]){height:47px}:host([changed]){color:#f4f4f4}
.f{display:flex;align-items:center;height:23px;border:1px solid #6b6b6d;border-radius:3px;padding:0 9px 0 7px;color:#f0f0f0;position:relative}
.f input{width:60px;flex:1;min-width:0;height:100%}
.u{font-size:11px;color:#828284}
.f select{width:100%;height:100%;padding-left:13px;line-height:18px}
.f ui-icon{position:absolute;left:6px;color:#8a8a8c;pointer-events:none}
.dis{background:#363638}.dis input{color:#6a6a6c}.dis .u{color:#a0a0a2}
.spin{padding:0 4px 0 20px}.spin .u{font-size:12px}
.k{appearance:none;width:19px;height:19px;border:2px solid #a9a9ab;border-radius:3px;margin-left:5px}
.k:checked{background:#20c862;border-color:#20c862}
.k:checked::after{content:"";display:block;width:5px;height:9px;margin:1px 0 0 5px;border:solid #31573f;border-width:0 2px 2px 0;rotate:42deg}
`, el => {
  const a = n => el.getAttribute(n), type = a('type') || 'num';
  let c;
  if (type === 'check') c = `<input class="k" type="checkbox" id="c"${el.hasAttribute('on') ? ' checked' : ''}>`;
  else if (type === 'select') c = `<div class="f"><ui-icon name="down2" w="11" h="6"></ui-icon><select id="c"><option>${a('value')}</option></select></div>`;
  else if (type === 'spin') c = `<div class="f spin"><svg style="position:absolute;left:2px" width="12" height="15" viewBox="0 0 12 15" fill="none" stroke="#77777a"><path d="M2 4.500Q6-1 10 4.500M1 7.500h10M2 10.500q4 5.500 8 0"/></svg><input id="c" value="${a('value')}"><span class="u">${a('unit')}</span></div>`;
  else c = `<div class="f${el.hasAttribute('off') ? ' dis' : ''}"><input id="c" value="${a('value')}"${el.hasAttribute('off') ? ' disabled' : ''}><span class="u">${a('unit')}</span></div>`;
  return `<label for="c"><slot></slot></label>${c}`;
});

const num = (l, v, u, x = '') => `<setting-row value="${v}" unit="${u}" ${x}>${l}</setting-row>`;
const chk = (l, x = '') => `<setting-row type="check" ${x}>${l}</setting-row>`;
const P = 'mm or %';
define('settings-list', `
:host{display:grid;grid-template-columns:1fr 17px;grid-template-rows:1fr 17px;min-height:0;border:1px solid #25a95a;border-radius:0 8px 8px 0;padding:9px 8px 9px 9px;margin:0 11px 10px 0}
.list{overflow:hidden;min-height:0;margin-top:-3px}
.v,.h{background:#181818;display:flex}
.v{padding:17px 0 0 8px}.v::after{content:"";width:2px;height:47%;background:#9a9a9a}
.h{padding:8px 28px 0 17px}.h::after{content:"";height:2px;flex:1;background:#9a9a9a}
.x{background:#3c3c3d}
`, `<div class="list">
<setting-group icon="h1" title-text="Schichthöhe">${num('Schichthöhe', '0,16', 'mm')}${num('Höhe der ersten Schicht', '0,16', 'mm', 'changed')}</setting-group>
<setting-group icon="h2" title-text="Breite der Linie">${num('Standard', '0,42', P)}${num('Erste Schicht', '0,5', P)}${num('Außenwand', '0,4', P, 'changed')}${num('Innere Wand', '0,42', P, 'changed')}${num('Obere Oberfläche', '0,42', P)}${num('Füllung', '0,42', P, 'changed')}${num('Innere massive Füllung', '0,42', P)}${num('Stützen', '0,42', P, 'changed')}</setting-group>
<setting-group icon="h3" title-text="Naht"><setting-row type="select" value="Zufall" changed>Nahtposition</setting-row>${chk('Versetzte innere Nähte')}${num('Naht Zwischenraum', '20%', P, 'changed')}<setting-row type="select" value="Keine">Schrägnaht (Beta)</setting-row>${chk('Rollenbasierte Wipe<br>Geschwindigkeit', 'two on')}${num('Wipe Geschwindigkeit', '80%', 'mm/s o. %', 'off')}${chk('Wischbewegung nach innen', 'on changed')}${chk('Wischbewegung vor äußerer<br>Schleife', 'two')}</setting-group>
<setting-group icon="h4" title-text="Präzision">${num('Slice-Lückenschlussradius', '0,049', 'mm')}${num('Auflösung', '0,012', 'mm')}${chk('Als Bogen drucken', 'on')}${num('X-Y-Loch-Kompensation', '0', 'mm')}${num('X-Y-Konturkompensation', '0', 'mm')}${num('Elefantenfußkompensation', '0,15', 'mm')}<setting-row type="spin" value="1" unit="Schichten" two>Elefantenfußkompensations<br>schichten</setting-row>${chk('Exakte Wand')}${chk('Konvertiere Löcher zu<br>Polyholes')}${chk('Präzise Z-Höhe')}</setting-group>
</div><div class="v"></div><div class="h"></div><div class="x"></div>`);

define('side-panel', `:host{display:grid;grid-template-rows:auto auto minmax(0,1fr);background:#4c4c4e;min-height:0;color:#e2e2e2}`,
  `<filament-panel></filament-panel><process-header></process-header><settings-list></settings-list>`);

/* ---------- taskbar ---------- */
define('task-bar', `
:host{display:grid;grid-template-columns:1fr auto 1fr;align-items:center;height:48px;background:#dcdbdb;border-top:1px solid #b4b4b5;color:#1c1c1c;font-size:11px;line-height:16px}
.w{display:flex;align-items:center;gap:4px;padding-left:20px;position:relative}
.w b{position:absolute;left:34px;top:1px;color:#fff;font-weight:400}
.w span span{color:#555}
.apps{display:flex;align-items:center;gap:6px;margin-left:2px}
.apps button{width:38px;height:38px;border-radius:4px;position:relative}
.s{display:flex;align-items:center;width:218px;height:30px;border-radius:15px;background:#f5f5f5;border:1px solid #c9c9c9;padding-left:11px;gap:10px;font-size:13px;margin:0 1px}
.s input{width:150px;color:#555}.s input::placeholder{color:#555;opacity:1}
.apps .act{background:#efefef}
.act::after,.run::after{content:"";position:absolute;bottom:0;width:16px;height:3px;border-radius:2px;background:#0f70c0}
.run::after{width:6px;background:#888}
.t{display:flex;align-items:center;justify-content:flex-end;padding-right:21px;gap:8px;text-align:right}
`, `<div class="w"><ui-icon name="moon" w="26" h="30"></ui-icon><b>1</b><span>9°C<br><span>Klar</span></span></div>
<div class="apps"><button aria-label="Start"><ui-icon name="win" w="24"></ui-icon></button><div class="s"><ui-icon name="mag" w="15"></ui-icon><input placeholder="Suche" aria-label="Suche"></div><button aria-label="Aufgabenansicht"><ui-icon name="task" w="24"></ui-icon></button><button aria-label="Teams"><ui-icon name="teams" w="24"></ui-icon></button><button aria-label="Explorer"><ui-icon name="files" w="26" h="24"></ui-icon></button><button aria-label="Store"><ui-icon name="store" w="24"></ui-icon></button><button aria-label="Outlook"><ui-icon name="outlook" w="24"></ui-icon></button><button class="run" aria-label="Chrome"><ui-icon name="chrome" w="24"></ui-icon></button><button class="act" aria-label="Creality Print"><ui-icon name="creality" w="24"></ui-icon></button></div>
<div class="t"><ui-icon name="up" w="12" h="8" style="margin-right:9px"></ui-icon><ui-icon name="net" w="18" h="17"></ui-icon><ui-icon name="vol" w="17" h="15"></ui-icon><span style="margin-left:8px">22:15<br>29.04.2026</span><ui-icon name="bell" w="15" h="16"></ui-icon></div>`);

define('slicer-app', `
:host{display:grid;grid-template-rows:auto minmax(0,1fr) auto;height:100vh}
main{display:grid;grid-template-columns:minmax(0,1fr) 418px;min-height:0}
`, `<title-bar></title-bar><main><view-port></view-port><side-panel></side-panel></main><task-bar></task-bar>`);
</script>
</body>
</html>
